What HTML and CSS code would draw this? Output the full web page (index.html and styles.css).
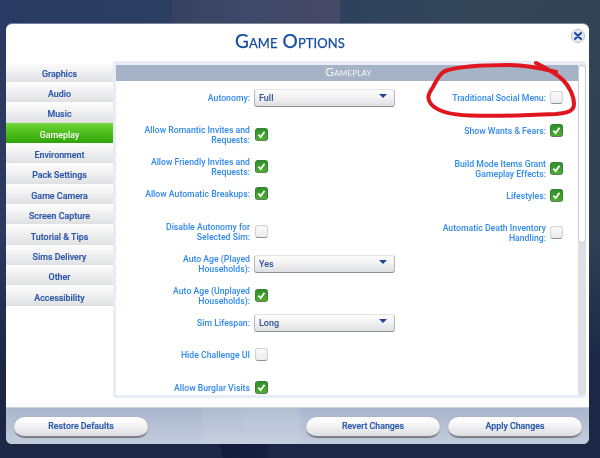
FILE: index.html
```html
<!DOCTYPE html>
<html lang="en">
<head>
<meta charset="utf-8">
<title>Game Options</title>
<link rel="stylesheet" href="styles.css">
</head>
<body>
<div class="stage">
  <div class="figure-shirt"></div>
  <div class="figure-legs"></div>
  <main class="dialog">
    <header class="title-bar">
      <h1 class="title">Game Options</h1>
      <button class="close" aria-label="Close">
        <svg viewBox="0 0 14 14" width="14" height="14"><circle cx="7" cy="7" r="6.6" fill="#e4e8f0" stroke="#aab2c2" stroke-width=".7"/><path d="M4 4l6 6M10 4l-6 6" stroke="#1f4da3" stroke-width="2.1" stroke-linecap="round"/></svg>
      </button>
    </header>
    <div class="middle">
      <nav class="tabs">
        <div class="tab">Graphics</div>
        <div class="tab">Audio</div>
        <div class="tab">Music</div>
        <div class="tab tab-active">Gameplay</div>
        <div class="tab">Environment</div>
        <div class="tab">Pack Settings</div>
        <div class="tab">Game Camera</div>
        <div class="tab">Screen Capture</div>
        <div class="tab">Tutorial &amp; Tips</div>
        <div class="tab">Sims Delivery</div>
        <div class="tab">Other</div>
        <div class="tab">Accessibility</div>
      </nav>
      <section class="panel">
        <div class="panel-main">
          <h2 class="panel-head">Gameplay</h2>
          <div class="form">
            <div class="col col-left">
              <div class="row"><span class="label">Autonomy:</span><span class="select">Full<i class="arrow"></i></span></div>
              <div class="row gap-11"><span class="label">Allow Romantic Invites and<br>Requests:</span><span class="check on"><svg viewBox="0 0 12 12"><path d="M2.6 6.2l2.5 2.7 4.2-6" /></svg></span></div>
              <div class="row gap-6"><span class="label">Allow Friendly Invites and<br>Requests:</span><span class="check on"><svg viewBox="0 0 12 12"><path d="M2.6 6.2l2.5 2.7 4.2-6" /></svg></span></div>
              <div class="row gap-1"><span class="label">Allow Automatic Breakups:</span><span class="check on"><svg viewBox="0 0 12 12"><path d="M2.6 6.2l2.5 2.7 4.2-6" /></svg></span></div>
              <div class="row gap-12"><span class="label">Disable Autonomy for<br>Selected Sim:</span><span class="check"></span></div>
              <div class="row gap-6"><span class="label">Auto Age (Played<br>Households):</span><span class="select">Yes<i class="arrow"></i></span></div>
              <div class="row gap-6"><span class="label">Auto Age (Unplayed<br>Households):</span><span class="check on"><svg viewBox="0 0 12 12"><path d="M2.6 6.2l2.5 2.7 4.2-6" /></svg></span></div>
              <div class="row gap-1"><span class="label">Sim Lifespan:</span><span class="select">Long<i class="arrow"></i></span></div>
              <div class="row gap-6"><span class="label">Hide Challenge UI</span><span class="check"></span></div>
              <div class="row gap-7"><span class="label">Allow Burglar Visits</span><span class="check on"><svg viewBox="0 0 12 12"><path d="M2.6 6.2l2.5 2.7 4.2-6" /></svg></span></div>
            </div>
            <div class="col col-right">
              <div class="row"><span class="label">Traditional Social Menu:</span><span class="check"></span></div>
              <div class="row gap-7"><span class="label">Show Wants &amp; Fears:</span><span class="check on"><svg viewBox="0 0 12 12"><path d="M2.6 6.2l2.5 2.7 4.2-6" /></svg></span></div>
              <div class="row gap-12"><span class="label">Build Mode Items Grant<br>Gameplay Effects:</span><span class="check on"><svg viewBox="0 0 12 12"><path d="M2.6 6.2l2.5 2.7 4.2-6" /></svg></span></div>
              <div class="row gap-1"><span class="label">Lifestyles:</span><span class="check on"><svg viewBox="0 0 12 12"><path d="M2.6 6.2l2.5 2.7 4.2-6" /></svg></span></div>
              <div class="row gap-11"><span class="label">Automatic Death Inventory<br>Handling:</span><span class="check"></span></div>
            </div>
          </div>
        </div>
        <div class="scrollbar"><div class="thumb"></div></div>
      </section>
    </div>
    <footer class="footer">
      <div class="ghost"><span class="ghost-btn"></span></div>
      <button class="btn">Restore Defaults</button>
      <div class="footer-right">
        <button class="btn">Revert Changes</button>
        <button class="btn">Apply Changes</button>
      </div>
    </footer>
  </main>
  <svg class="scribble" viewBox="0 0 600 458" width="600" height="458" aria-hidden="true">
    <path d="M536 63C545 68 556 73 563 80C569 86 574 96 574 104C574 111 568 113 556 114C535 115 500 116.500 470 115.500C452 115 437 111 431 104C426 98 429 93 433 87C437 80 439 74 445 71C456 67 480 65 510 65C525 65 540 68 556 72" fill="none" stroke="#e0161e" stroke-width="4" stroke-linecap="round" stroke-linejoin="round"/>
  </svg>
</div>
</body>
</html>
```

FILE: styles.css
```css
* { box-sizing: border-box; }
html, body { margin: 0; padding: 0; }
body { width: 600px; height: 458px; overflow: hidden; background: #1b2745; font-family: "Roboto", "Lato", sans-serif; }

.stage {
  position: relative;
  width: 600px;
  height: 458px;
  padding: 24px 11px 14px 6px;
  overflow: hidden;
  background: linear-gradient(100deg, #2a3a62 0%, #2c4060 40%, #344658 70%, #2f4254 100%);
  filter: blur(0.35px);
}
.stage::after {
  content: "";
  position: absolute;
  left: 0; right: 0; bottom: 0; height: 230px;
  background: linear-gradient(180deg, rgba(27,38,70,0) 0%, #1b2745 60%);
}
.figure-shirt {
  position: absolute;
  left: 172px; top: 0;
  width: 168px; height: 26px;
  background: linear-gradient(90deg, #36415f 0%, #3f4868 45%, #464865 100%);
}
.figure-legs {
  position: absolute;
  z-index: 1;
  left: 218px; top: 440px;
  width: 130px; height: 18px;
  background: linear-gradient(90deg, #131b3a, #16203f 45%, #1d2a48 55%, #131b3a);
  clip-path: polygon(0 0, 40% 0, 38% 100%, 4% 100%);
}

.dialog {
  position: relative;
  z-index: 2;
  display: flex;
  flex-direction: column;
  width: 583px;
  height: 420px;
  background: #fff;
  border-radius: 6px;
  overflow: hidden;
  box-shadow: 0 -1px 0 rgba(170,180,200,.6);
}

.title-bar { position: relative; height: 37px; display: flex; align-items: center; justify-content: center; flex: none; }
.title {
  margin: 0 15px 5px 0;
  font-family: "Lato", sans-serif;
  font-size: 19px;
  font-weight: 400;
  line-height: 1;
  letter-spacing: .1px;
  font-variant: small-caps;
  color: #154c9d;
  -webkit-text-stroke: .25px #154c9d;
}
.close {
  position: absolute;
  right: 4px; top: 5px;
  width: 14px; height: 14px;
  padding: 0; border: 0; background: none; display: block;
}
.close svg { display: block; }

.middle { display: flex; height: 337px; flex: none; }
.tabs { width: 107px; flex: none; padding-top: .6px; }
.tab {
  height: 20.35px;
  padding-top: 4px;
  display: flex; align-items: center; justify-content: center;
  font-size: 8.900px;
  font-weight: 500;
  color: #2a55a8;
  -webkit-text-stroke: .15px #2a55a8;
  background: linear-gradient(180deg, #ffffff 0%, #f4f4f5 35%, #dfe0e2 100%);
}
.tab-active { color: #fff; -webkit-text-stroke: 0; background: linear-gradient(180deg, #74d83a 0%, #4fc01f 45%, #2fa30a 100%); }

.panel {
  flex: none;
  width: 473px;
  display: flex;
  background: #e8ecf4;
  padding: 3.500px 0 3.500px 3px;
  border-radius: 3px;
}
.panel-main { width: 462px; display: flex; flex-direction: column; background: #fff; overflow: hidden; }
.panel-head {
  margin: 0; height: 16.500px; flex: none;
  display: flex; align-items: center; justify-content: center;
  padding: 0 0 2px 3px;
  background: #a6b2c6;
  color: #f5f7fa;
  font-family: "Lato", sans-serif;
  font-size: 12px; font-weight: 400;
  font-variant: small-caps;
  letter-spacing: .2px;
}
.form { display: flex; padding-top: 3.500px; }
.col { display: flex; flex-direction: column; flex: none; }
.col-left { width: 304px; }
.col-right { width: 147px; }
.row { display: flex; align-items: center; height: 26px; flex: none; }
.gap-1 { margin-top: 1px; }
.gap-6 { margin-top: 6px; }
.gap-7 { margin-top: 7px; }
.gap-11 { margin-top: 11px; }
.gap-12 { margin-top: 12px; }
.label {
  padding-top: 2px;
  text-align: right;
  font-size: 8.700px;
  line-height: 9.500px;
  font-weight: 500;
  color: #3089ec;
  white-space: nowrap;
}
.col-left .label { width: 134px; margin-right: 4px; }
.col-right .label { width: 126px; margin-right: 4px; }

.select {
  position: relative;
  display: flex; align-items: center;
  width: 141px; height: 18px;
  padding: 1px 0 0 4px;
  font-size: 9px; font-weight: 500;
  color: #2d4f94;
  background: linear-gradient(180deg, #fdfdfd 0%, #f1f1f2 50%, #dedfe1 100%);
  border-radius: 3px;
  border: 1px solid #e4e5e8;
  border-bottom: 1.500px solid #8c8e92;
  border-right-color: #b6b8bc;
  border-left-color: #b6b8bc;
}
.arrow {
  position: absolute;
  right: 7px; top: 4px;
  width: 0; height: 0;
  border-left: 4px solid transparent;
  border-right: 4px solid transparent;
  border-top: 4px solid #1c45a0;
}

.check {
  flex: none;
  display: block;
  width: 13px; height: 13px;
  margin-left: 1px;
  border-radius: 3px;
  background: linear-gradient(180deg, #fafafa, #ececee);
  border: 1px solid #d0d2d6;
  border-bottom: 1.500px solid #909296;
}
.col-right .check { margin-left: 0; }
.check.on {
  background: linear-gradient(180deg, #2f8f2a, #4fae2c);
  border: 1px solid #38803a;
  border-bottom: 1.500px solid #5f7a60;
}
.check svg { display: block; width: 100%; height: 100%; fill: none; stroke: #fff; stroke-width: 2; }

.scrollbar {
  flex: none;
  width: 8px;
  background: #dcdfe4;
  border-radius: 4px;
}
.thumb {
  height: 178px;
  background: #fff;
  border: 1px solid #c4c9d2;
  border-radius: 4px;
}

.footer {
  position: relative;
  flex: 1;
  margin-top: 9px;
  display: flex;
  justify-content: space-between;
  align-items: flex-start;
  padding: 9px 7px 0 8px;
  background: linear-gradient(180deg, #a9b6cc 0%, #c4ccdc 100%);
  border-top: 1px solid #c8d0de;
}
.footer-right { display: flex; gap: 8px; }
.ghost {
  position: absolute;
  left: 197px; top: 0; bottom: 0;
  width: 97px;
  background: rgba(255,255,255,.08);
}
.ghost-btn {
  position: absolute;
  left: 39px; top: 1px;
  width: 60px; height: 20px;
  border-radius: 9px;
  background: rgba(255,255,255,.05);
}
.btn {
  position: relative;
  width: 134px; height: 21px;
  padding: 0 0 2px;
  font-family: inherit;
  font-size: 8.800px; font-weight: 500;
  color: #2555aa;
  -webkit-text-stroke: .15px #2555aa;
  border: 0;
  border-radius: 10.500px;
  background: linear-gradient(180deg, #ffffff 0%, #f4f4f5 45%, #dcdde0 100%);
  border-bottom: 2px solid #7d8088;
  box-shadow: 0 0 1px rgba(70,80,100,.6);
}

.scribble { position: absolute; left: 0; top: 0; z-index: 3; pointer-events: none; }
```
